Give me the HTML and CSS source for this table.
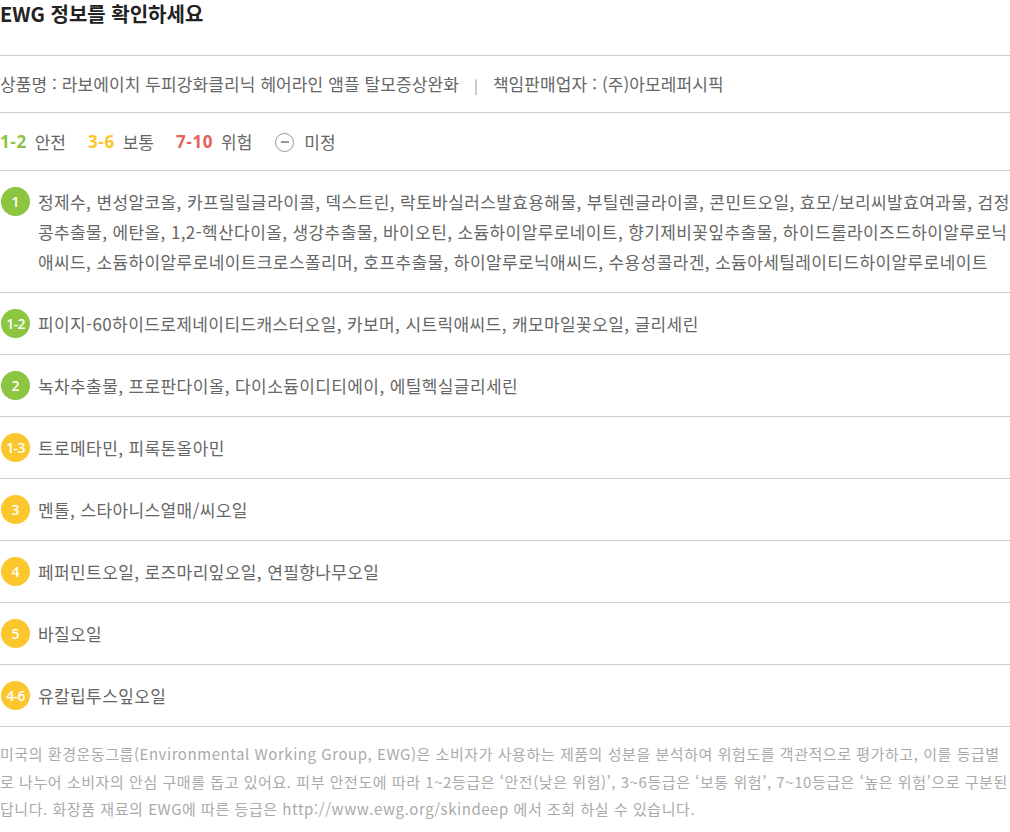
FILE: index.html
```html
<!DOCTYPE html>
<html lang="ko">
    <head>
        <meta charset="utf-8">
        <title>EWG 정보</title>
        <meta name="viewport" content="width=device-width, initial-scale=1">
        <link rel="stylesheet" href="styles.css">
    </head>
    <body>
        <div class="ewg">
            <h2 class="ewg-title">EWG 정보를 확인하세요</h2>
            <p class="ewg-product">상품명 : 라보에이치 두피강화클리닉 헤어라인 앰플 탈모증상완화<span class="sep">|</span>책임판매업자 : (주)아모레퍼시픽</p>
            <div class="ewg-legend">
                <span class="lv green">1-2</span><span class="lbl">안전</span>
                <span class="lv yellow">3-6</span><span class="lbl">보통</span>
                <span class="lv red">7-10</span><span class="lbl">위험</span>
                <span class="none-icon"></span><span class="lbl">미정</span>
            </div>
            <ul class="ewg-list">
                <li><span class="badge green">1</span><p>정제수, 변성알코올, 카프릴릴글라이콜, 덱스트린, 락토바실러스발효용해물, 부틸렌글라이콜, 콘민트오일, 효모/보리씨발효여과물, 검정콩추출물, 에탄올, 1,2-헥산다이올, 생강추출물, 바이오틴, 소듐하이알루로네이트, 향기제비꽃잎추출물, 하이드롤라이즈드하이알루로닉애씨드, 소듐하이알루로네이트크로스폴리머, 호프추출물, 하이알루로닉애씨드, 수용성콜라겐, 소듐아세틸레이티드하이알루로네이트</p></li>
                <li><span class="badge green small">1-2</span><p>피이지-60하이드로제네이티드캐스터오일, 카보머, 시트릭애씨드, 캐모마일꽃오일, 글리세린</p></li>
                <li><span class="badge green">2</span><p>녹차추출물, 프로판다이올, 다이소듐이디티에이, 에틸헥실글리세린</p></li>
                <li><span class="badge yellow small">1-3</span><p>트로메타민, 피록톤올아민</p></li>
                <li><span class="badge yellow">3</span><p>멘톨, 스타아니스열매/씨오일</p></li>
                <li><span class="badge yellow">4</span><p>페퍼민트오일, 로즈마리잎오일, 연필향나무오일</p></li>
                <li><span class="badge yellow">5</span><p>바질오일</p></li>
                <li><span class="badge yellow small">4-6</span><p>유칼립투스잎오일</p></li>
            </ul>
            <p class="ewg-note">미국의 환경운동그룹(Environmental Working Group, EWG)은 소비자가 사용하는 제품의 성분을 분석하여 위험도를 객관적으로 평가하고, 이를 등급별로 나누어 소비자의 안심 구매를 돕고 있어요. 피부 안전도에 따라 1~2등급은 ‘안전(낮은 위험)’, 3~6등급은 ‘보통 위험’, 7~10등급은 ‘높은 위험’으로 구분된답니다. 화장품 재료의 EWG에 따른 등급은 http://www.ewg.org/skindeep 에서 조회 하실 수 있습니다.</p>
        </div>
    </body>
</html>
```

FILE: styles.css
```css
* {
    margin: 0;
    padding: 0;
}
body {
    font-family: "Noto Sans CJK KR", "Noto Sans", sans-serif;
    color: #666;
    background: #fff;
}
ul {
    list-style: none;
}
.ewg {
    width: 1010px;
}
.ewg-title {
    font-size: 20px;
    font-weight: 700;
    color: #222;
    line-height: 28px;
    height: 55px;
    border-bottom: 1px solid #ccc;
}
.ewg-product {
    font-size: 17px;
    letter-spacing: 0.1px;
    line-height: 26px;
    padding: 15px 0 14px;
    border-bottom: 1px solid #ccc;
}
.ewg-product .sep {
    margin: 0 15px;
    color: #999;
    font-size: 14px;
}
.ewg-legend {
    display: flex;
    align-items: center;
    font-size: 17px;
    line-height: 26px;
    padding: 16px 0 15px;
    border-bottom: 1px solid #ccc;
}
.lv {
    font-family: "Open Sans", sans-serif;
    font-weight: 700;
    letter-spacing: 0.6px;
    margin-right: 8px;
}
.lbl {
    margin-right: 22px;
}
.green {
    color: #8cc540;
}
.yellow {
    color: #fbc52a;
}
.red {
    color: #e8605c;
}
.none-icon {
    width: 17px;
    height: 17px;
    border: 1.5px solid #999;
    border-radius: 50%;
    position: relative;
    margin: 0 10px 0 1px;
}
.none-icon::after {
    content: "";
    position: absolute;
    left: 4.5px;
    right: 4.5px;
    top: 7.5px;
    height: 1.5px;
    background: #999;
}
.ewg-list li {
    display: flex;
    align-items: flex-start;
    padding: 16px 0 15px;
    border-bottom: 1px solid #ccc;
}
.ewg-list p {
    font-size: 17px;
    letter-spacing: 0.4px;
    line-height: 30px;
    flex: 1;
}
.badge {
    flex: none;
    width: 29px;
    height: 29px;
    border-radius: 50%;
    margin: 0 8px 0 1px;
    color: #fff;
    font-family: "Open Sans", sans-serif;
    font-size: 14px;
    font-weight: 600;
    line-height: 29px;
    text-align: center;
}
.badge.small {
    font-size: 14px;
    letter-spacing: -0.6px;
}
.badge.green {
    background: #8cc540;
}
.badge.yellow {
    background: #fcc72c;
}
.ewg-note {
    font-size: 15px;
    letter-spacing: 0.55px;
    line-height: 27.5px;
    color: #aaa;
    padding-top: 13px;
}
```
